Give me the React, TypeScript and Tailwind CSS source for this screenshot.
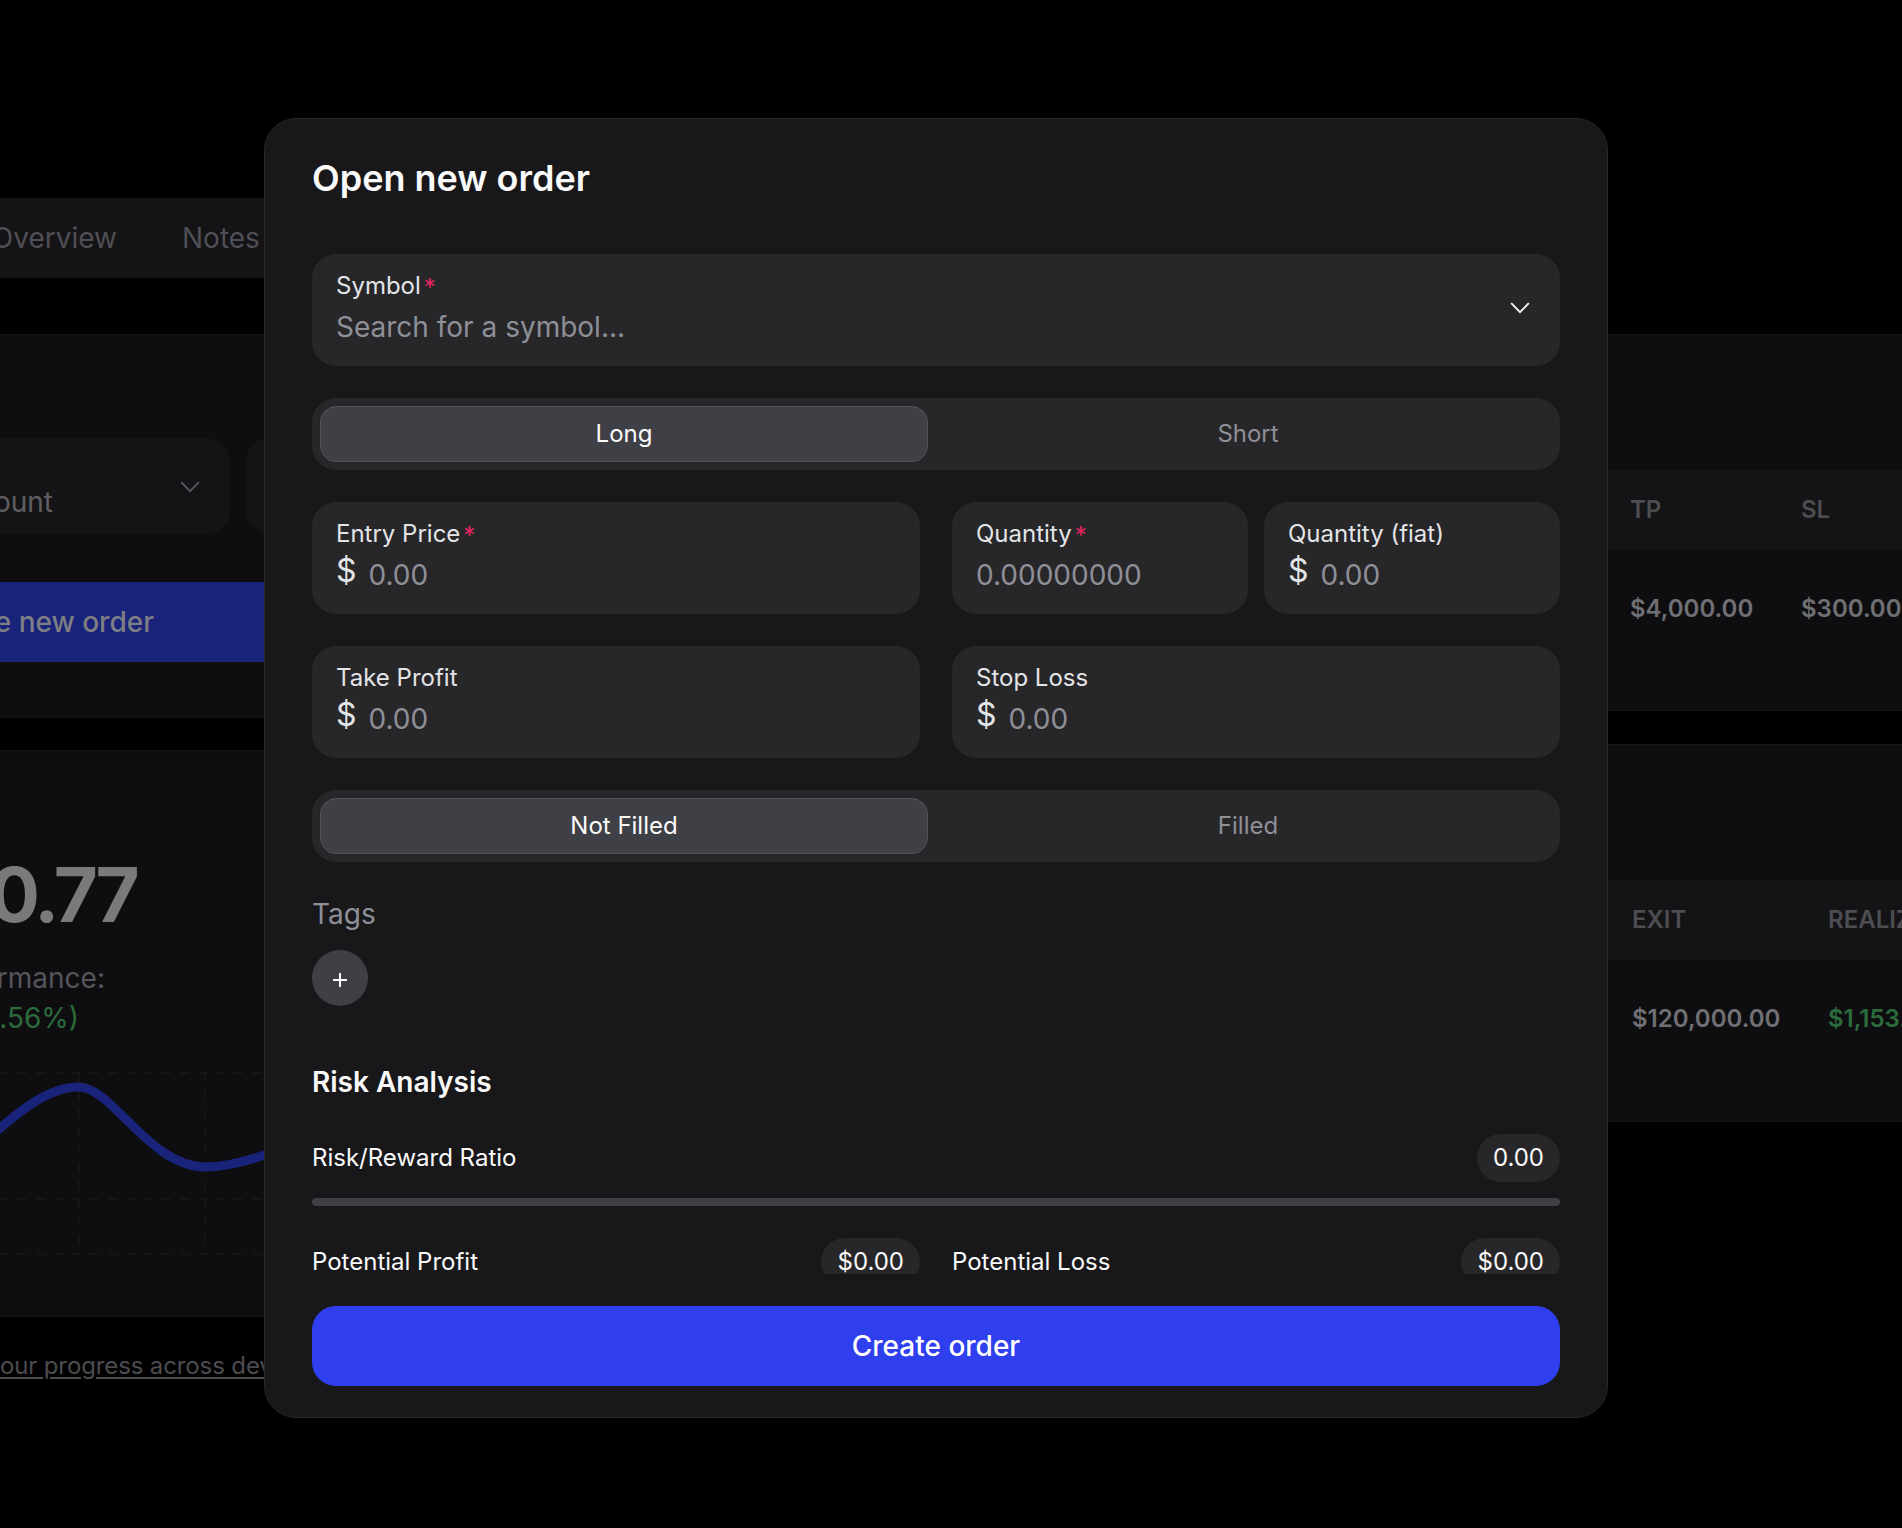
import React from "react";

const Chevron = ({ className }: { className: string }) => (
  <svg width="20" height="12" viewBox="0 0 20 12" fill="none" className={className}>
    <path d="M1.2 1.2 L10 10.2 L18.8 1.2" stroke="currentColor" strokeWidth="1.8" />
  </svg>
);

const Req = () => <span className="relative top-[2px] ml-[3px] text-[#e3245f]">*</span>;

const Field = ({ label, required, money, placeholder, className = "" }: { label: string; required?: boolean; money?: boolean; placeholder: string; className?: string }) => (
  <div className={`h-[112px] rounded-[24px] bg-[#27272a] px-[24px] pt-[16px] ${className}`}>
    <div className="text-[24px] leading-[32px] font-normal text-[#e4e4e7] whitespace-nowrap">
      {label}
      {required && <Req />}
    </div>
    <div className="mt-[5px] flex h-[40px] items-center text-[28px] leading-[40px] text-[#8f8f98]">
      {money && <span className="mr-[12px] -mt-[8px] text-[32px] leading-[40px] text-[#e4e4e7]">$</span>}
      <span className="whitespace-nowrap">{placeholder}</span>
    </div>
  </div>
);

const Segmented = ({ on, off }: { on: string; off: string }) => (
  <div className="grid h-[72px] grid-cols-2 items-center gap-[16px] rounded-[24px] bg-[#27272a] p-[8px]">
    <div className="flex h-[56px] items-center justify-center rounded-[16px] border border-[#52525b] bg-[#3f3f46] text-[24px] text-[#fafafa]">{on}</div>
    <div className="flex h-[56px] items-center justify-center text-[24px] text-[#8f8f98]">{off}</div>
  </div>
);

const Stat = ({ label, value }: { label: string; value: string }) => (
  <div className="flex h-[48px] items-center justify-between">
    <span className="text-[24px] font-normal text-[#fafafa]">{label}</span>
    <span className="flex h-[48px] items-center rounded-full bg-[#27272a] px-[16px] text-[24px] font-normal text-[#fafafa]">{value}</span>
  </div>
);

const LeftColumn = () => (
  <div className="w-[270px] overflow-hidden pt-[198px]">
    <div className="flex h-[80px] w-[270px] items-center bg-[#141416] text-[28px] text-[#4f4f55]">
      <div className="flex w-[117px] shrink-0 justify-end"><span className="shrink-0">Overview</span></div>
      <span className="ml-[65px]">Notes</span>
    </div>
    <div className="mt-[56px] h-[384px] border-y border-[#151517] bg-[#0e0e10] pt-[103px]">
      <div className="flex gap-[16px]">
        <div className="relative flex h-[96px] w-[230px] shrink-0 justify-end rounded-r-[24px] bg-[#141416]">
          <span className="absolute left-0 top-[46px] w-[53px] text-right text-[28px] leading-[36px] text-[#5f5f63]"><span className="float-right">ount</span></span>
          <Chevron className="absolute right-[30px] top-[43px] text-[#5a5a60]" />
        </div>
        <div className="h-[96px] w-[40px] shrink-0 rounded-l-[24px] bg-[#141416]" />
      </div>
      <div className="mt-[48px] flex h-[80px] items-center bg-[#1a237a]">
        <div className="flex w-[154px] shrink-0 justify-end text-[28px] font-medium text-[#7d7e86]"><span className="shrink-0 whitespace-nowrap">e new order</span></div>
      </div>
    </div>
    <div className="mt-[32px] h-[567px] border-y border-[#151517] bg-[#0e0e10] pt-[100px]">
      <div className="flex w-[136px] justify-end text-[76px] leading-[86px] font-bold tracking-[-0.05em] text-[#7a7a7a]"><span className="shrink-0">0.77</span></div>
      <div className="mt-[21px] flex w-[105px] justify-end text-[28px] leading-[40px] text-[#55555b]"><span className="shrink-0">rmance:</span></div>
      <div className="flex w-[79px] justify-end text-[28px] leading-[40px] text-[#2c6b3c]"><span className="shrink-0">.56%)</span></div>
      <svg width="270" height="190" viewBox="0 0 270 190" className="mt-[34px] block" fill="none">
        <g stroke="#1d1d20" strokeWidth="1" strokeDasharray="9 9">
          <path d="M0 1H270M0 127H270M0 182H270" />
          <path d="M79 1V180M205 1V180" />
        </g>
        <path d="M-10 65C18 40 48 15 79 15C112 15 150 95 205 95C225 95 245 90 270 81" stroke="#1a237a" strokeWidth="9" />
      </svg>
    </div>
    <div className="mt-[31px] w-[300px] -ml-[13px] text-[24px] leading-[36px] tracking-[-0.005em] text-[#4c4c50] underline underline-offset-[3px] whitespace-nowrap">your progress across devices</div>
  </div>
);

const RightTable = ({ heads, values, height, className = "" }: { heads: [string, number][]; values: [string, string][]; height: number; className?: string }) => (
  <div className={`border-y border-[#151517] bg-[#0e0e10] pt-[135px] ${className}`} style={{ height }}>
    <div className="flex h-[80px] items-center bg-[#141416] text-[24px] font-semibold text-[#4d4d52]">
      {heads.map(([h, w]) => (
        <div key={h} className="shrink-0 whitespace-nowrap" style={{ width: w }}>{h}</div>
      ))}
    </div>
    <div className="flex h-[118px] items-center text-[24px] font-semibold">
      {values.map(([v, c], i) => (
        <div key={v} className="shrink-0 whitespace-nowrap" style={{ width: heads[i][1], color: c }}>{v}</div>
      ))}
    </div>
  </div>
);

const RightColumn = () => (
  <div className="w-[302px] overflow-hidden pt-[334px]">
    <RightTable height={377} className="[&>div]:pl-[30px]" heads={[["TP", 171], ["SL", 200]]} values={[["$4,000.00", "#707074"], ["$300.00", "#707074"]]} />
    <RightTable height={378} className="mt-[33px] [&>div]:pl-[32px]" heads={[["EXIT", 196], ["REALIZED", 200]]} values={[["$120,000.00", "#707074"], ["$1,153.00", "#2c6b3c"]]} />
  </div>
);

export default function App() {
  return (
    <div className="relative flex h-[1528px] w-full justify-between overflow-hidden bg-black font-['Inter',sans-serif]">
      <LeftColumn />
      <RightColumn />
      <div className="absolute left-[264px] top-[118px] flex h-[1300px] w-[1344px] flex-col rounded-[32px] border border-[#27272a] bg-[#18181b] px-[47px] pt-[39px] pb-[31px]">
        <h1 className="text-[36px] leading-[40px] font-semibold text-[#fafafa]">Open new order</h1>
        <div className="mt-[56px] h-[1020px] overflow-hidden">
          <div className="relative">
            <Field label="Symbol" required placeholder="Search for a symbol..." />
            <Chevron className="absolute right-[30px] top-[48px] text-[#fafafa]" />
          </div>
          <div className="mt-[32px]"><Segmented on="Long" off="Short" /></div>
          <div className="mt-[32px] grid grid-cols-2 gap-[32px]">
            <Field label="Entry Price" required money placeholder="0.00" />
            <div className="grid grid-cols-2 gap-[16px]">
              <Field label="Quantity" required placeholder="0.00000000" />
              <Field label="Quantity (fiat)" money placeholder="0.00" />
            </div>
          </div>
          <div className="mt-[32px] grid grid-cols-2 gap-[32px]">
            <Field label="Take Profit" money placeholder="0.00" />
            <Field label="Stop Loss" money placeholder="0.00" />
          </div>
          <div className="mt-[32px]"><Segmented on="Not Filled" off="Filled" /></div>
          <div className="mt-[32px] text-[28px] leading-[40px] text-[#8f8f98]">Tags</div>
          <div className="mt-[16px] flex h-[56px] w-[56px] items-center justify-center rounded-full bg-[#3f3f46]">
            <svg width="16" height="16" viewBox="0 0 16 16" fill="none" className="mt-[3px]"><path d="M8 1V15M1 8H15" stroke="#fafafa" strokeWidth="2" /></svg>
          </div>
          <h2 className="mt-[56px] text-[28px] leading-[40px] font-semibold text-[#fafafa]">Risk Analysis</h2>
          <div className="mt-[32px]"><Stat label="Risk/Reward Ratio" value="0.00" /></div>
          <div className="mt-[16px] h-[8px] rounded-full bg-[#3f3f46]" />
          <div className="mt-[32px] grid grid-cols-2 gap-[32px]">
            <Stat label="Potential Profit" value="$0.00" />
            <Stat label="Potential Loss" value="$0.00" />
          </div>
        </div>
        <button className="mt-[32px] h-[80px] w-full shrink-0 rounded-[24px] bg-[#2f3fee] text-[28px] font-medium text-white">Create order</button>
      </div>
    </div>
  );
}
